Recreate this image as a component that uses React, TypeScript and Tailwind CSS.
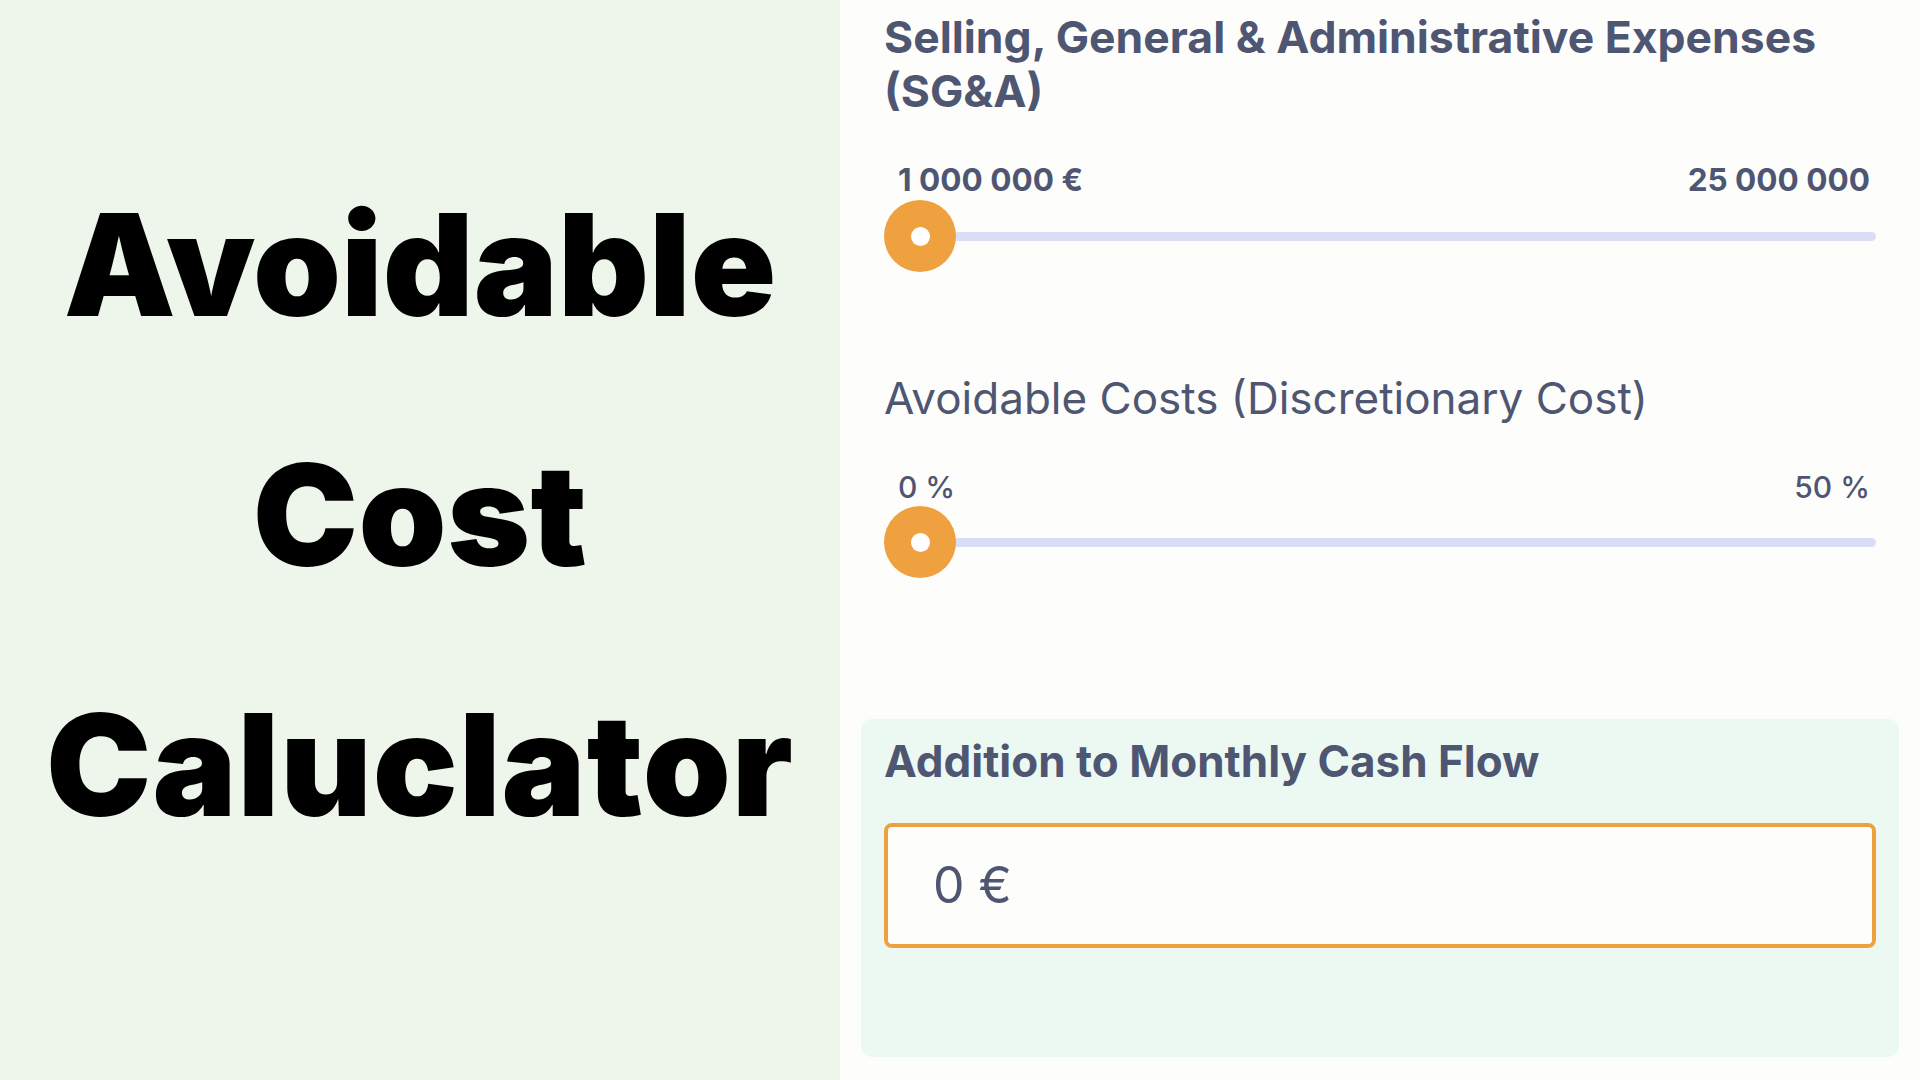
import React from "react";

function Slider() {
  return (
    <div className="relative h-[72px] flex items-center">
      <div className="h-[9px] w-full rounded-full bg-[#dadef5]" />
      <div className="absolute left-0 top-0 w-[72px] h-[72px] rounded-full bg-[#efa03f] flex items-center justify-center">
        <div className="w-[19px] h-[19px] rounded-full bg-white" />
      </div>
    </div>
  );
}

export default function App() {
  return (
    <div
      className="w-[1920px] h-[1080px] flex bg-[#fdfdfc] overflow-hidden"
      style={{ fontFamily: "Inter, 'Noto Sans', sans-serif" }}
    >
      <div className="w-[840px] h-full bg-[#eef6ec] flex flex-col items-center pt-[140px]">
        <div className="text-[141px] leading-[250px] font-black text-black text-center">Avoidable</div>
        <div className="text-[141px] leading-[250px] font-black text-black text-center tracking-[0.5px]">Cost</div>
        <div className="text-[141px] leading-[250px] font-black text-black text-center tracking-[1px]">Caluclator</div>
      </div>
      <div className="flex-1 flex flex-col pt-[10px] px-[21px] text-[#4e5672]">
        <div className="px-[23px]">
          <h2 className="text-[44.5px] leading-[54px] font-bold">
            Selling, General &amp; Administrative Expenses (SG&amp;A)
          </h2>
          <div className="mt-[44px] flex justify-between pl-[14px] pr-[6px] text-[31.5px] leading-[36px] font-bold">
            <span>1 000 000 €</span>
            <span>25 000 000</span>
          </div>
          <div className="mt-[2px]">
            <Slider />
          </div>
          <h2 className="mt-[100px] text-[44px] leading-[52px] font-normal">
            Avoidable Costs (Discretionary Cost)
          </h2>
          <div className="mt-[45px] flex justify-between pl-[14px] pr-[6px] text-[30px] leading-[36px] font-medium">
            <span>0 %</span>
            <span>50 %</span>
          </div>
          <div className="mt-[1px]">
            <Slider />
          </div>
        </div>
        <div className="mt-[141px] h-[338px] rounded-[10px] bg-[#ecf9f3] px-[23px] pt-[16px]">
          <h2 className="text-[44px] leading-[52px] font-bold">Addition to Monthly Cash Flow</h2>
          <div className="mt-[36px] h-[125px] rounded-[8px] border-4 border-[#efa03f] bg-[#fdfdfc] flex items-center pl-[45px] text-[50px] font-normal">
            0 €
          </div>
        </div>
      </div>
    </div>
  );
}
